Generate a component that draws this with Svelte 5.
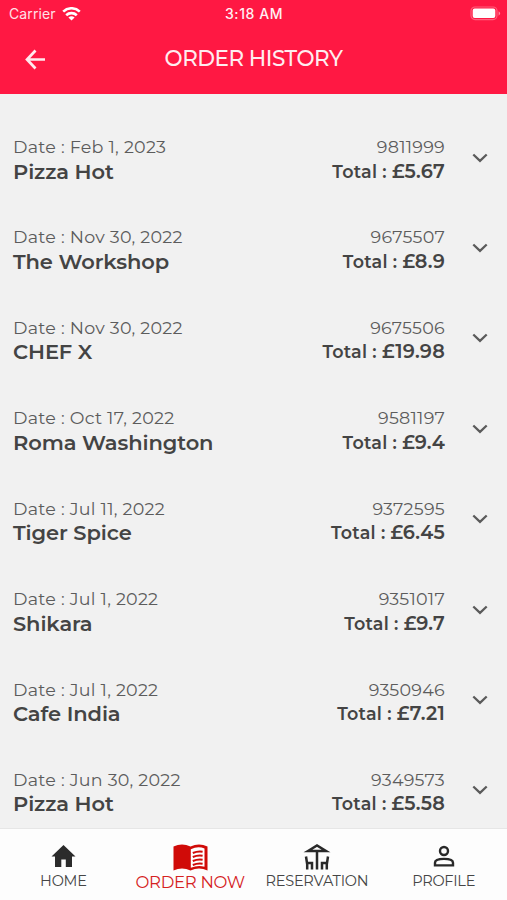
<script>
  const orders = [
    { date: "Feb 1, 2023", id: "9811999", name: "Pizza Hot", total: "5.67" },
    { date: "Nov 30, 2022", id: "9675507", name: "The Workshop", total: "8.9" },
    { date: "Nov 30, 2022", id: "9675506", name: "CHEF X", total: "19.98" },
    { date: "Oct 17, 2022", id: "9581197", name: "Roma Washington", total: "9.4" },
    { date: "Jul 11, 2022", id: "9372595", name: "Tiger Spice", total: "6.45" },
    { date: "Jul 1, 2022", id: "9351017", name: "Shikara", total: "9.7" },
    { date: "Jul 1, 2022", id: "9350946", name: "Cafe India", total: "7.21" },
    { date: "Jun 30, 2022", id: "9349573", name: "Pizza Hot", total: "5.58" },
  ];
</script>

<div class="screen">
  <header>
    <div class="status">
      <div class="carrier">
        <span>Carrier</span>
        <svg width="19" height="14" viewBox="0 0 19 14">
          <g fill="none" stroke="#fff" stroke-width="2.6">
            <path d="M1.2 4.6a12 12 0 0 1 16.6 0" />
            <path d="M4.2 8.2a7.7 7.7 0 0 1 10.6 0" />
          </g>
          <path d="M6.4 10.6a4.6 4.6 0 0 1 6.2 0L9.5 13.6z" fill="#fff" />
        </svg>
      </div>
      <span class="clock">3:18 AM</span>
      <svg class="battery" width="31" height="15" viewBox="0 0 31 15">
        <rect x="1" y="1" width="26" height="12.6" rx="4" fill="none" stroke="#ff5f7d" stroke-width="1.2" />
        <rect x="2.7" y="2.6" width="22.6" height="9.4" rx="2" fill="#fff" />
        <path d="M28.6 5.3q3 2.2 0 4.4z" fill="#ff8ca2" />
      </svg>
    </div>
    <div class="title">
      <svg width="22" height="22" viewBox="0 0 22 22">
        <path d="M21 11.500H3M11.500 2.500L3 11.500l8.500 9" fill="none" stroke="#ffe9ed" stroke-width="2.700" />
      </svg>
      <h1>ORDER HISTORY</h1>
    </div>
  </header>

  <main>
    {#each orders as order}
      <div class="order">
        <div class="place">
          <p class="date">Date : {order.date}</p>
          <p class="name">{order.name}</p>
        </div>
        <div class="amount">
          <p class="number">{order.id}</p>
          <p class="total">Total : <b>£{order.total}</b></p>
        </div>
        <svg class="chevron" width="16" height="10" viewBox="0 0 16 10">
          <path d="M1.3 1.5L8 7.900l6.700-6.400" fill="none" stroke="#5b5b5b" stroke-width="2.300" />
        </svg>
      </div>
    {/each}
  </main>

  <nav>
    <div class="tab">
      <svg width="24" height="27" viewBox="0 0 24 27">
        <path d="M12.500 1L.5 12.400H4V23h6.300v-7.500h4.500V23H21V12.400h3.500z" fill="#2b2b2b" />
      </svg>
      <span>HOME</span>
    </div>
    <div class="tab active">
      <svg width="35" height="27" viewBox="0 0 35 27">
        <path d="M.5 2.500Q9-1.500 17.500 2.500 26-1.500 34.500 2.500v24Q26 22.500 17.500 26.500 9 22.500.5 26.500z" fill="#d00b08" />
        <path d="M17.800 5.300Q25 1.800 31.500 4.600V22.700Q25 20.700 17.800 23.700z" fill="#fff" />
        <path d="M19.800 9q5-2 9.800-1.200M19.800 13q5-2 9.800-1.200M19.800 17q5-2 9.800-1.200M19.800 21q5-2 9.800-1.200" fill="none" stroke="#d00b08" stroke-width="2" />
      </svg>
      <span>ORDER NOW</span>
    </div>
    <div class="tab">
      <svg width="26" height="27" viewBox="0 0 26 27" fill="none" stroke="#292929" stroke-width="2.500">
        <path d="M4 7L13 1.500 22 7zM13 7v18.500" />
        <path d="M2 12.500l1 6.500h5v6.500M3.200 19v6.500M24 12.500l-1 6.500h-5v6.500M22.800 19v6.500" />
      </svg>
      <span>RESERVATION</span>
    </div>
    <div class="tab">
      <svg width="22" height="27" viewBox="0 0 22 27" fill="none" stroke="#292929" stroke-width="2.400">
        <circle cx="11" cy="7" r="4" />
        <path d="M2 21.400v-2.600c0-5.200 18-5.200 18 0v2.600z" />
      </svg>
      <span>PROFILE</span>
    </div>
  </nav>
</div>

<style>
  :global(body) {
    margin: 0;
  }
  .screen {
    display: flex;
    flex-direction: column;
    height: 900px;
    overflow: hidden;
    background: #f1f1f1;
    font-family: Montserrat, Inter, sans-serif;
  }
  header {
    flex: none;
    height: 94px;
    background: #ff1843;
    color: #fff;
  }
  .status {
    display: grid;
    grid-template-columns: 1fr auto 1fr;
    align-items: center;
    height: 27px;
    padding: 0 6px 0 9px;
    font-family: Inter, sans-serif;
    font-size: 14px;
  }
  .carrier {
    display: flex;
    align-items: center;
    gap: 6px;
    color: #ffe1e7;
    letter-spacing: 0.1px;
  }
  .clock {
    font-weight: 500;
    letter-spacing: 0.55px;
    color: #fff0f3;
    margin-right: 2px;
  }
  .battery {
    justify-self: end;
  }
  .title {
    display: grid;
    grid-template-columns: 46px 1fr 46px;
    align-items: center;
    height: 64px;
    padding: 0 24px;
  }
  h1 {
    margin: -2px 0 0;
    text-align: center;
    font-size: 21.5px;
    font-weight: 500;
    letter-spacing: -0.5px;
    color: #ffecef;
  }
  main {
    flex: 1;
    min-height: 0;
    padding-top: 41px;
    overflow: hidden;
  }
  .order {
    display: flex;
    height: 90.43px;
    padding: 0 19px 0 13px;
    box-sizing: border-box;
  }
  .place {
    flex: 1;
  }
  .amount {
    text-align: right;
  }
  p {
    margin: 0;
    white-space: nowrap;
  }
  .date,
  .number {
    height: 23.5px;
    line-height: 24px;
    font-size: 17.5px;
    color: #5c5c5c;
    letter-spacing: 0.25px;
  }
  .name,
  .total {
    height: 25px;
    line-height: 25px;
    font-weight: 600;
    color: #444;
  }
  .name {
    font-size: 21px;
    letter-spacing: -0.1px;
  }
  .total {
    font-size: 17.5px;
    letter-spacing: 0.25px;
  }
  .total b {
    font-size: 19.3px;
    font-weight: 600;
  }
  .chevron {
    margin: 17.5px 0 0 27px;
  }
  nav {
    flex: none;
    display: grid;
    grid-template-columns: repeat(4, 1fr);
    height: 72px;
    box-sizing: border-box;
    border-top: 1px solid #e6e6e6;
    background: #fdfdfd;
  }
  .tab {
    display: flex;
    flex-direction: column;
    align-items: center;
    color: #454545;
    font-size: 14.5px;
    letter-spacing: -0.25px;
  }
  .tab svg {
    height: 27px;
    margin-top: 15px;
    overflow: visible;
  }
  .tab span {
    line-height: 20px;
    white-space: nowrap;
  }
  .tab.active {
    color: #d5221f;
    font-size: 16.5px;
    letter-spacing: -0.3px;
  }
  .active span {
    line-height: 22px;
  }
</style>
